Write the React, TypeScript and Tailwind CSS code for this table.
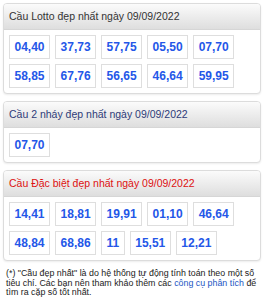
const lotto = ['04,40', '37,73', '57,75', '05,50', '07,70', '58,85', '67,76', '56,65', '46,64', '59,95'];
const nhay = ['07,70'];
const dacBiet = ['14,41', '18,81', '19,91', '01,10', '46,64', '48,84', '68,86', '11', '15,51', '12,21'];

function Card({ title, color, items }: { title: string; color: string; items: string[] }) {
  return (
    <div className="rounded-[4px] border border-[#dcdcdc] bg-white shadow-[0_1px_2px_rgba(0,0,0,0.08)] overflow-hidden">
      <div
        className={`h-[26px] flex items-center px-[5px] text-[10.5px] border-b border-[#d6d6d6] bg-gradient-to-b from-[#fbfbfb] to-[#dedede] ${color}`}
      >
        {title}
      </div>
      <div className="flex flex-wrap gap-[5px] px-[5px] pt-[5px] pb-[5px]">
        {items.map((n, i) => (
          <div
            key={i}
            className="h-[24px] px-[4.5px] flex items-center border border-[#dedede] bg-white text-[12px] font-bold text-[#2457e8]"
          >
            {n}
          </div>
        ))}
      </div>
    </div>
  );
}

export default function App() {
  return (
    <div
      className="w-[265px] h-[300px] bg-white pl-[3px] pr-[4px] pt-[3px] flex flex-col gap-[7px]"
      style={{ fontFamily: '"Liberation Sans", Arial, sans-serif' }}
    >
      <Card title="Cầu Lotto đẹp nhất ngày 09/09/2022" color="text-[#333333]" items={lotto} />
      <Card title="Cầu 2 nháy đẹp nhất ngày 09/09/2022" color="text-[#2d3b78]" items={nhay} />
      <Card title="Cầu Đặc biệt đẹp nhất ngày 09/09/2022" color="text-[#dd1111]" items={dacBiet} />
      <div className="pl-[3px] pt-[1px] text-[8.85px] leading-[9.5px] text-[#222222] whitespace-nowrap">
        <div>(*) "Cầu đẹp nhất" là do hệ thống tự động tính toán theo một số</div>
        <div>
          tiêu chí. Các bạn nên tham khảo thêm các{' '}
          <span className="text-[#1b56c4]">công cụ phân tích</span> để
        </div>
        <div>tìm ra cặp số tốt nhất.</div>
      </div>
    </div>
  );
}
